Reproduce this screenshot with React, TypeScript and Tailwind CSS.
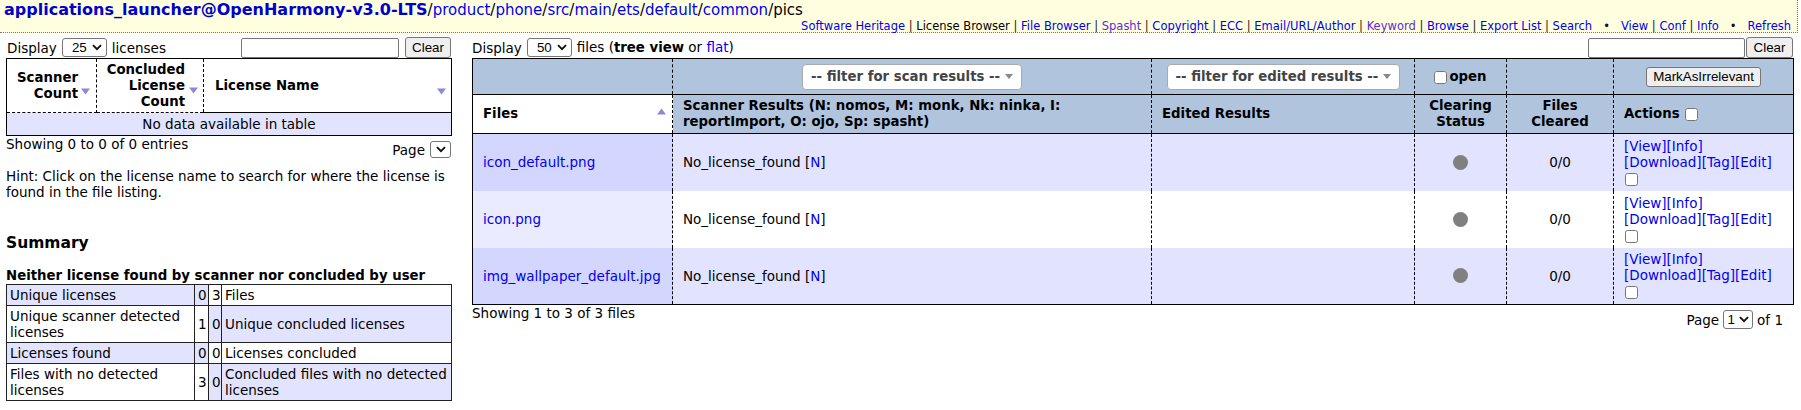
import React from "react";

const LINK = "text-[#0000ee]";
const VLINK = "text-[#5b2bd8]";
const B = "font-bold text-[13.3px]";

function Chevron() {
  return (
    <svg width="10" height="7" viewBox="0 0 10 7" className="block">
      <path d="M1 1.2 L5 5.2 L9 1.2" fill="none" stroke="#111" strokeWidth="1.9" />
    </svg>
  );
}

function SortDown({ className }: { className: string }) {
  return (
    <svg width="9" height="7" viewBox="0 0 9 7" className={className}>
      <polygon points="0,0.5 9,0.5 4.5,6.5" fill="#8a8ad8" />
    </svg>
  );
}

function SortUp({ className }: { className: string }) {
  return (
    <svg width="9" height="7" viewBox="0 0 9 7" className={className}>
      <polygon points="0,6.5 9,6.5 4.5,0.5" fill="#8a8ad8" />
    </svg>
  );
}

function FilterBox({ label, className }: { label: string; className: string }) {
  return (
    <div
      className={
        "mx-auto h-[26px] bg-white border border-[#aaa] rounded-[4px] flex items-center justify-between pl-[8px] pr-[8px] font-bold text-[13.3px] text-[#444] whitespace-nowrap " +
        className
      }
    >
      <span>{label}</span>
      <svg width="8" height="5" viewBox="0 0 8 5">
        <polygon points="0,0 8,0 4,5" fill="#888" />
      </svg>
    </div>
  );
}

function Header() {
  const sep = <span className="text-[#222]"> | </span>;
  return (
    <div className="h-[33px] w-[1798px] bg-[#ffffe0] border-r border-b border-dotted border-[#777]">
      <div className="pl-[4px] text-[15px] leading-[19px] whitespace-nowrap">
        <span className="font-bold text-[16px] text-[#0000cc]">applications_launcher@OpenHarmony-v3.0-LTS</span>
        /<span className={LINK}>product</span>/<span className={LINK}>phone</span>/
        <span className={LINK}>src</span>/<span className={LINK}>main</span>/
        <span className={LINK}>ets</span>/<span className={LINK}>default</span>/
        <span className={LINK}>common</span>/pics
      </div>
      <div className="text-[11.5px] leading-[13px] text-right pr-[6px] whitespace-nowrap">
        <span className={LINK}>Software Heritage</span>
        {sep}
        <span>License Browser</span>
        {sep}
        <span className={LINK}>File Browser</span>
        {sep}
        <span className={VLINK}>Spasht</span>
        {sep}
        <span className={LINK}>Copyright</span>
        {sep}
        <span className={LINK}>ECC</span>
        {sep}
        <span className={LINK}>Email/URL/Author</span>
        {sep}
        <span className={VLINK}>Keyword</span>
        {sep}
        <span className={LINK}>Browse</span>
        {sep}
        <span className={LINK}>Export List</span>
        {sep}
        <span className={LINK}>Search</span>
        <span className="inline-block mx-[11px] text-[#111]">•</span>
        <span className={LINK}>View</span>
        {sep}
        <span className={LINK}>Conf</span>
        {sep}
        <span className={LINK}>Info</span>
        <span className="inline-block mx-[11px] text-[#111]">•</span>
        <span className={LINK}>Refresh</span>
      </div>
    </div>
  );
}

const BTN =
  "bg-[#efefef] border border-[#767676] rounded-[3px] font-['Liberation_Sans',Arial,sans-serif] text-[13.33px] leading-[15px] text-black flex items-center justify-center";
const SEL =
  "bg-white border border-[#767676] rounded-[3px] font-['Liberation_Sans',Arial,sans-serif] text-[13.33px] text-black flex items-center";
const INPUT = "bg-white border border-[#767676] rounded-[2px]";

function LeftPanel() {
  const summary = [
    ["Unique licenses", "0", "3", "Files"],
    ["Unique scanner detected|licenses", "1", "0", "Unique concluded licenses"],
    ["Licenses found", "0", "0", "Licenses concluded"],
    ["Files with no detected|licenses", "3", "0", "Concluded files with no detected|licenses"],
  ];
  const renderText = (t: string) => {
    const parts = t.split("|");
    return parts.map((p, i) => (
      <React.Fragment key={i}>
        {p}
        {i < parts.length - 1 && <br />}
      </React.Fragment>
    ));
  };
  return (
    <div className="w-[445px] shrink-0">
      <div className="h-[21px] flex items-center justify-between">
        <div className="flex items-center pl-[1px]">
          <span>Display</span>
          <div className={SEL + " ml-[5px] w-[45px] h-[19px] justify-end gap-[5px] pr-[4px]"}>
            <span>25</span>
            <Chevron />
          </div>
          <span className="ml-[5px]">licenses</span>
        </div>
        <div className="flex items-center">
          <div className={INPUT + " w-[158px] h-[20px]"} />
          <div className={BTN + " ml-[6px] w-[46px] h-[21px]"}>Clear</div>
        </div>
      </div>

      <table className="w-[445px] table-fixed border-collapse border border-black">
        <colgroup>
          <col className="w-[90px]" />
          <col className="w-[107px]" />
          <col className="w-[248px]" />
        </colgroup>
        <thead>
          <tr className="h-[54px]">
            <th className={"relative text-right pr-[18px] align-middle border-r border-dashed border-r-black border-b border-b-black " + B}>
              Scanner
              <br />
              Count
              <SortDown className="absolute right-[6px] top-[29px]" />
            </th>
            <th className={"relative text-right pr-[18px] align-middle border-r border-dashed border-r-black border-b border-b-black " + B}>
              Concluded
              <br />
              License
              <br />
              Count
              <SortDown className="absolute right-[5px] top-[28px]" />
            </th>
            <th className={"relative text-left pl-[11px] align-middle border-b border-b-black " + B}>
              License Name
              <SortDown className="absolute right-[5px] top-[29px]" />
            </th>
          </tr>
        </thead>
        <tbody>
          <tr className="h-[23px]">
            <td colSpan={3} className="text-center bg-[#e2e4ff] align-middle">
              No data available in table
            </td>
          </tr>
        </tbody>
      </table>

      <div className="flex justify-between items-start">
        <span>Showing 0 to 0 of 0 entries</span>
        <div className="flex items-center mt-[5px]">
          <span>Page</span>
          <div className={SEL + " ml-[5px] w-[21px] h-[17px] justify-center"}>
            <Chevron />
          </div>
        </div>
      </div>

      <div className="mt-[10px] whitespace-nowrap">
        Hint: Click on the license name to search for where the license is
        <br />
        found in the file listing.
      </div>

      <div className="mt-[34px] text-[15.5px] leading-[18px] font-bold">Summary</div>
      <div className={"mt-[16px] whitespace-nowrap " + B}>
        Neither license found by scanner nor concluded by user
      </div>
      <table className="w-[445px] table-fixed border-collapse border border-[#222]">
        <colgroup>
          <col className="w-[188px]" />
          <col className="w-[14px]" />
          <col className="w-[13px]" />
          <col className="w-[230px]" />
        </colgroup>
        <tbody>
          {summary.map((r, i) => {
            const lav = "bg-[#e2e4ff]";
            const a = i % 2 === 0 ? lav : "bg-white";
            const b = i % 2 === 0 ? "bg-white" : lav;
            const cell = "border border-[#222] px-[3px] py-[2px] align-middle";
            return (
              <tr key={i}>
                <td className={cell + " " + a}>{renderText(r[0])}</td>
                <td className={cell + " px-[2px] text-center " + a}>{r[1]}</td>
                <td className={cell + " px-[2px] text-center " + b}>{r[2]}</td>
                <td className={cell + " " + b}>{renderText(r[3])}</td>
              </tr>
            );
          })}
        </tbody>
      </table>
    </div>
  );
}

function RightPanel() {
  const files = ["icon_default.png", "icon.png", "img_wallpaper_default.jpg"];
  const dash = "border-r border-dashed border-r-black";
  return (
    <div className="w-[1321px] shrink-0">
      <div className="h-[21px] flex items-center justify-between">
        <div className="flex items-center">
          <span>Display</span>
          <div className={SEL + " ml-[5px] w-[45px] h-[19px] justify-end gap-[5px] pr-[4px]"}>
            <span>50</span>
            <Chevron />
          </div>
          <span className="ml-[5px] whitespace-nowrap">
            files (<b className="text-[13.3px]">tree view</b> or <span className={LINK}>flat</span>)
          </span>
        </div>
        <div className="flex items-center">
          <div className={INPUT + " w-[157px] h-[20px]"} />
          <div className={BTN + " ml-[1px] w-[47px] h-[21px]"}>Clear</div>
        </div>
      </div>

      <table className="w-[1321px] table-fixed border-collapse border border-black">
        <colgroup>
          <col className="w-[200px]" />
          <col className="w-[479px]" />
          <col className="w-[263px]" />
          <col className="w-[92px]" />
          <col className="w-[107px]" />
          <col className="w-[180px]" />
        </colgroup>
        <thead>
          <tr className="h-[36px] bg-[#b0c4de]">
            <td className={dash}></td>
            <td className={dash + " align-middle"}>
              <FilterBox label="-- filter for scan results --" className="w-[220px]" />
            </td>
            <td className={dash + " align-middle"}>
              <FilterBox label="-- filter for edited results --" className="w-[233px]" />
            </td>
            <td className={dash + " align-middle text-center"}>
              <span className={"inline-flex items-center mt-[3px] " + B}>
                <input type="checkbox" className="w-[13px] h-[13px] m-0 mr-[2px]" />
                open
              </span>
            </td>
            <td className={dash}></td>
            <td className="align-middle">
              <div className={BTN + " mx-auto w-[115px] h-[20px]"}>MarkAsIrrelevant</div>
            </td>
          </tr>
          <tr className="h-[39px] border-t border-black">
            <th className={dash + " relative bg-white text-left pl-[10px] align-middle " + B}>
              Files
              <SortUp className="absolute right-[6px] top-[13px]" />
            </th>
            <th className={dash + " bg-[#b0c4de] text-left pl-[10px] align-middle whitespace-nowrap " + B}>
              Scanner Results (N: nomos, M: monk, Nk: ninka, I:
              <br />
              reportImport, O: ojo, Sp: spasht)
            </th>
            <th className={dash + " bg-[#b0c4de] text-left pl-[10px] align-middle " + B}>Edited Results</th>
            <th className={dash + " bg-[#b0c4de] text-center align-middle " + B}>
              Clearing
              <br />
              Status
            </th>
            <th className={dash + " bg-[#b0c4de] text-center align-middle " + B}>
              Files
              <br />
              Cleared
            </th>
            <th className={"bg-[#b0c4de] text-left pl-[10px] align-middle " + B}>
              <span className="inline-flex items-center">
                Actions
                <input type="checkbox" className="w-[13px] h-[13px] m-0 ml-[5px]" />
              </span>
            </th>
          </tr>
        </thead>
        <tbody>
          {files.map((f, i) => {
            const odd = i % 2 === 0;
            const sorted = odd ? "bg-[#d3d6ff]" : "bg-[#eaebff]";
            const row = odd ? "bg-[#e2e4ff]" : "bg-white";
            return (
              <tr key={f} className={"h-[57px] " + (i === 0 ? "border-t border-black " : "") + row}>
                <td className={dash + " pl-[10px] align-middle " + sorted}>
                  <span className={LINK}>{f}</span>
                </td>
                <td className={dash + " pl-[10px] align-middle"}>
                  No_license_found [<span className={LINK}>N</span>]
                </td>
                <td className={dash}></td>
                <td className={dash + " align-middle"}>
                  <div className="mx-auto w-[15px] h-[15px] rounded-full bg-[#808080]" />
                </td>
                <td className={dash + " text-center align-middle"}>0/0</td>
                <td className="pl-[10px] align-middle">
                  <div className={LINK}>[View][Info]</div>
                  <div className={LINK}>[Download][Tag][Edit]</div>
                  <input type="checkbox" className="block w-[13px] h-[13px] mt-[3px] ml-[1px] mb-[1px]" />
                </td>
              </tr>
            );
          })}
        </tbody>
      </table>

      <div className="flex justify-between items-start">
        <span>Showing 1 to 3 of 3 files</span>
        <div className="flex items-center mt-[5px] pr-[10px]">
          <span>Page</span>
          <div className={SEL + " ml-[4px] w-[30px] h-[19px] justify-center gap-[4px]"}>
            <span>1</span>
            <Chevron />
          </div>
          <span className="ml-[4px]">of 1</span>
        </div>
      </div>
    </div>
  );
}

export default function App() {
  return (
    <div className="w-[1801px] h-[410px] bg-white text-black font-['DejaVu_Sans',Verdana,sans-serif] text-[13.5px] leading-[16px] overflow-hidden">
      <Header />
      <div className="flex pl-[6px] pt-[4px] gap-[21px]">
        <LeftPanel />
        <RightPanel />
      </div>
    </div>
  );
}
